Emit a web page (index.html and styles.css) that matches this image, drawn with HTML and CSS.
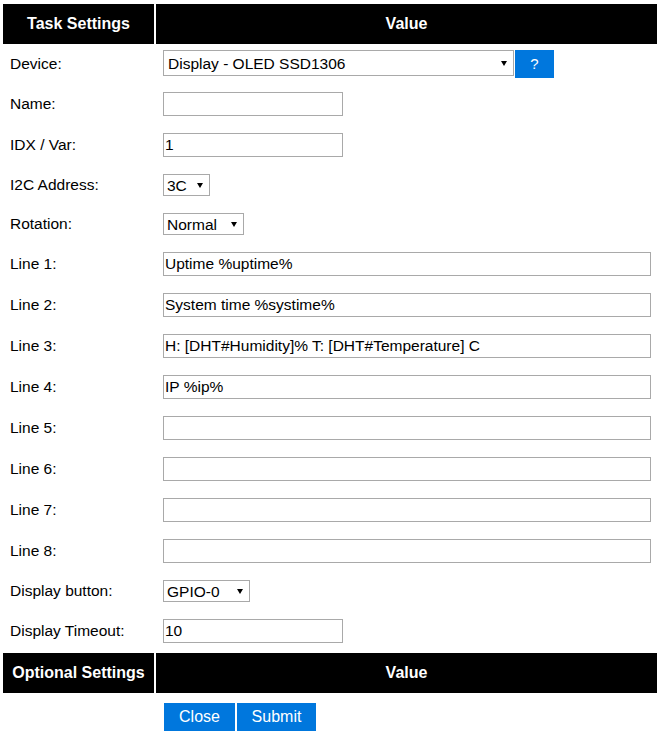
FILE: index.html
```
<!DOCTYPE html>
<html>
<head>
<meta charset="utf-8">
<link rel="stylesheet" href="styles.css">
</head>
<body>
<table class="settings">
  <colgroup><col class="c1"><col class="c2"></colgroup>
  <tr class="head"><th>Task Settings</th><th>Value</th></tr>
  <tr class="r-device"><td>Device:</td><td><div class="device-line"><span class="sel w-device"><select><option>Display - OLED SSD1306</option></select></span><a class="btn help">?</a></div></td></tr>
  <tr class="r-text"><td>Name:</td><td><input class="inp w-short" type="text" value=""></td></tr>
  <tr class="r-text"><td>IDX / Var:</td><td><input class="inp w-short" type="text" value="1"></td></tr>
  <tr class="r-select"><td>I2C Address:</td><td><span class="sel w-i2c"><select><option>3C</option></select></span></td></tr>
  <tr class="r-select"><td>Rotation:</td><td><span class="sel w-rot"><select><option>Normal</option></select></span></td></tr>
  <tr class="r-text"><td>Line 1:</td><td><input class="inp w-full" type="text" value="Uptime %uptime%"></td></tr>
  <tr class="r-text"><td>Line 2:</td><td><input class="inp w-full" type="text" value="System time %systime%"></td></tr>
  <tr class="r-text"><td>Line 3:</td><td><input class="inp w-full" type="text" value="H: [DHT#Humidity]% T: [DHT#Temperature] C"></td></tr>
  <tr class="r-text"><td>Line 4:</td><td><input class="inp w-full" type="text" value="IP %ip%"></td></tr>
  <tr class="r-text"><td>Line 5:</td><td><input class="inp w-full" type="text" value=""></td></tr>
  <tr class="r-text"><td>Line 6:</td><td><input class="inp w-full" type="text" value=""></td></tr>
  <tr class="r-text"><td>Line 7:</td><td><input class="inp w-full" type="text" value=""></td></tr>
  <tr class="r-text"><td>Line 8:</td><td><input class="inp w-full" type="text" value=""></td></tr>
  <tr class="r-select"><td>Display button:</td><td><span class="sel w-gpio"><select><option>GPIO-0</option></select></span></td></tr>
  <tr class="r-text r-last"><td>Display Timeout:</td><td><input class="inp w-short" type="text" value="10"></td></tr>
  <tr class="head"><th>Optional Settings</th><th>Value</th></tr>
  <tr class="r-buttons"><td></td><td><div class="actions"><a class="btn">Close</a><a class="btn">Submit</a></div></td></tr>
</table>
</body>
</html>
```
FILE: styles.css
```
html, body {
  margin: 0;
  padding: 0;
  background: #ffffff;
}
body {
  font-family: "Liberation Sans", Arial, sans-serif;
  font-size: 15.5px;
  color: #000000;
}
.settings {
  margin: 2px 0 0 1px;
  border-spacing: 2px;
  table-layout: fixed;
  width: 658px;
}
.c1 { width: 151px; }
.c2 { width: 501px; }
.settings th {
  background: #000000;
  color: #ffffff;
  font-size: 16px;
  font-weight: bold;
  height: 40px;
  padding: 0;
  text-align: center;
  vertical-align: middle;
}
.settings td {
  padding: 5px 7px 10px 7px;
  vertical-align: top;
  line-height: 24px;
  white-space: nowrap;
}
.r-select td { line-height: 22px; }
.r-device td { padding: 4px 7px 7px 7px; line-height: 28px; }
.r-last td { padding-bottom: 8px; }
.r-buttons td { padding: 8px 7px 4px 7px; }

.inp {
  display: block;
  box-sizing: border-box;
  height: 24px;
  border: 1px solid #a9a9a9;
  padding: 0 1px;
  margin: 0;
  font-family: "Liberation Sans", Arial, sans-serif;
  font-size: 15.5px;
  color: #000;
  background: #fff;
  outline: none;
}
.w-short { width: 180px; }
.w-full { width: 488px; }

.sel {
  position: relative;
  display: inline-block;
  vertical-align: top;
}
.sel select {
  -webkit-appearance: none;
  appearance: none;
  box-sizing: border-box;
  display: block;
  height: 22px;
  width: 100%;
  margin: 0;
  border: 1px solid #a9a9a9;
  border-radius: 0;
  padding: 0 0 0 3px;
  background: #fff;
  font-family: "Liberation Sans", Arial, sans-serif;
  font-size: 15.5px;
  color: #000;
  outline: none;
}
.sel::after {
  content: "";
  position: absolute;
  right: 7px;
  top: 50%;
  margin-top: -2px;
  border-left: 3px solid transparent;
  border-right: 3px solid transparent;
  border-top: 5px solid #000;
  pointer-events: none;
}
.w-device { width: 351px; }
.w-device select { height: 26px; padding-left: 4px; }
.w-i2c { width: 47px; }
.w-rot { width: 81px; }
.w-gpio { width: 87px; }

.device-line {
  display: flex;
  align-items: flex-start;
  gap: 1px;
}
.btn {
  display: inline-block;
  box-sizing: border-box;
  background: #0077dd;
  color: #ffffff;
  font-size: 16px;
  height: 28px;
  line-height: 28px;
  padding: 0 15px;
  text-decoration: none;
  text-align: center;
}
.help {
  width: 39px;
  padding: 0;
  font-size: 15px;
}
.actions {
  display: flex;
  gap: 2px;
  padding-left: 1px;
}
.actions .btn:first-child { width: 71px; padding: 0; }
.actions .btn:last-child { width: 79px; padding: 0; }
```
